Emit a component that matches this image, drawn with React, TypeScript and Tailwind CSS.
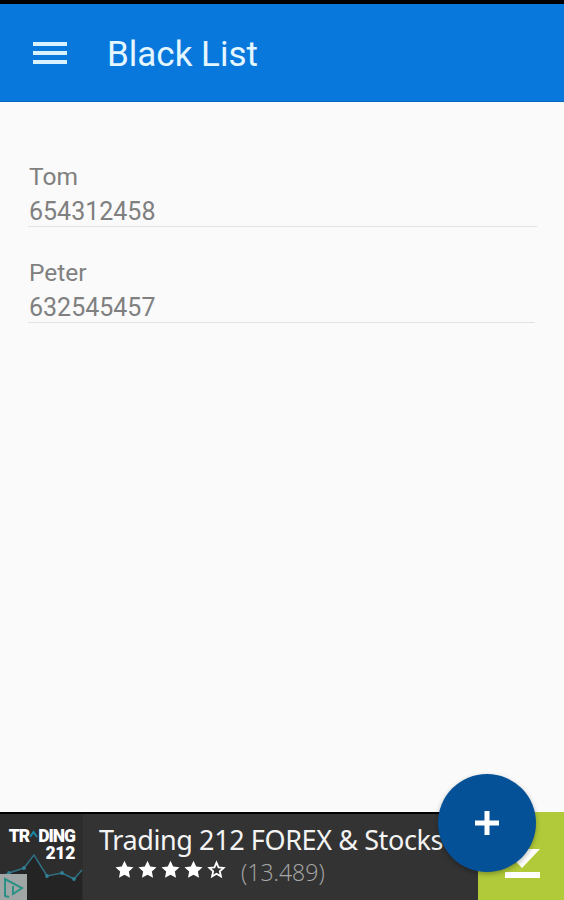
import React from 'react';

interface Contact {
  name: string;
  phone: string;
  line: string;
}

const contacts: Contact[] = [
  { name: 'Tom', phone: '654312458', line: 'w-[509px]' },
  { name: 'Peter', phone: '632545457', line: 'w-[507px]' },
];

const STAR = 'M12 .8l3.4 7.3 8 1-5.9 5.4 1.5 7.9L12 18.5l-7 3.9 1.5-7.9L.6 9.1l8-1z';

function Star({ filled }: { filled: boolean }) {
  return (
    <svg className="h-[19px] w-[19px]" viewBox="0 0 24 24">
      {filled ? (
        <path d={STAR} fill="#fff" />
      ) : (
        <path
          d="M12 3.3l2.6 5.9 6.4.7-4.8 4.3 1.4 6.4-5.6-3.3-5.6 3.3 1.4-6.4L3 9.9l6.4-.7z"
          fill="none"
          stroke="#fff"
          strokeWidth="2.3"
        />
      )}
    </svg>
  );
}

function Header() {
  return (
    <header className="flex h-[102px] items-center border-t-4 border-b border-t-black border-b-[#0766bd] bg-[#0878dc] pt-[4px] pl-[33px]">
      <button className="-mt-[3px] flex flex-col gap-[5px]" aria-label="Open menu">
        <span className="h-[4px] w-[34px] bg-[#d8f3ff]" />
        <span className="h-[4px] w-[34px] bg-[#d8f3ff]" />
        <span className="h-[4px] w-[34px] bg-[#d8f3ff]" />
      </button>
      <h1 className="ml-[40px] text-[35px] leading-[40px] text-[#e4f6ff]">Black List</h1>
    </header>
  );
}

function AdLogo() {
  return (
    <div className="relative h-full w-[83px] overflow-hidden bg-[#2d2d2d] pt-[14px] pr-[8px] text-right font-['Roboto'] text-[17.5px] leading-[17px] font-black tracking-[-1px] text-white">
      <div className="flex h-[17px] items-start justify-end">
        <span>TR</span>
        <svg className="mt-[2px] h-[8px] w-[9px]" viewBox="0 0 9 8">
          <path d="M1 7l3.5-5L8 7" fill="none" stroke="#168aa8" strokeWidth="2" />
        </svg>
        <span>DING</span>
      </div>
      <div className="tracking-[-0.3px]">212</div>
      <svg className="absolute top-[39px] left-0 h-[50px] w-[83px]" viewBox="0 0 83 50">
        <path d="M0 24L9 20l15-5L34 2l13 21 15-3 12 6 8-9v33H0z" fill="#242424" />
        <path d="M0 24L9 20l15-5L34 2l13 21 15-3 12 6 8-9" fill="none" stroke="#2f7185" strokeWidth="1.5" />
        <g fill="#318093">
          <circle cx="9" cy="20" r="1.9" />
          <circle cx="24" cy="15" r="1.9" />
          <circle cx="47" cy="23" r="1.9" />
          <circle cx="62" cy="20" r="1.9" />
          <circle cx="74" cy="26" r="1.9" />
        </g>
        <path d="M0 21h27v29H0z" fill="#a0a5a5" />
        <path d="M9 44l-4-1V26l17 9-9 6V33" fill="none" stroke="#2a9184" strokeWidth="2" />
      </svg>
    </div>
  );
}

function AdBanner() {
  return (
    <footer className="flex h-[88px] bg-[#333]">
      <div className="flex flex-1 border-t-2 border-black">
        <AdLogo />
        <div className="flex-1 pl-[16px] whitespace-nowrap">
          <div className="mt-[11px] font-['Noto_Sans'] text-[27px] leading-[30px] tracking-[-0.4px] text-[#f4f4f4]">
            Trading 212 FOREX &amp; Stocks
          </div>
          <div className="mt-[3px] flex items-center pl-[16px]">
            <div className="-mt-[5px] flex gap-[4px]">
              {[1, 2, 3, 4, 5].map((n) => (
                <Star key={n} filled={n < 5} />
              ))}
            </div>
            <span className="ml-[15px] font-['Open_Sans'] text-[23px] leading-[28px] font-light text-[#a8a8a8]">
              (13.489)
            </span>
          </div>
        </div>
      </div>
      <div className="flex w-[86px] justify-center bg-[#b1ca39]">
        <svg className="mt-[15px] ml-[2px] h-[52px] w-[38px]" viewBox="0 0 38 52">
          <path d="M12 0h13v22h12L19 41 1 22h11z" fill="#fff" />
          <path d="M2 45h35v6H2z" fill="#fff" />
        </svg>
      </div>
    </footer>
  );
}

export default function App() {
  return (
    <div className="relative flex h-[900px] w-[564px] flex-col overflow-hidden bg-[#fafafa] font-['Roboto',sans-serif]">
      <Header />
      <main className="flex-1 pt-[58px] pl-[28px]">
        {contacts.map((c) => (
          <div key={c.phone} className="mb-[29px] text-[25px] text-[#808080]">
            <div className="pl-[1px] text-[24.5px] leading-[34px]">{c.name}</div>
            <div className="pt-[3px] pl-[1px] leading-[29px]">{c.phone}</div>
            <div className={`h-px bg-[#e3e3e3] ${c.line}`} />
          </div>
        ))}
      </main>
      <AdBanner />

      {/* Floating add button */}
      <button
        className="absolute top-[774px] left-[438px] flex h-[98px] w-[98px] items-center justify-center rounded-full bg-[#045198] shadow-[0_2px_5px_rgba(0,0,0,0.3)]"
        aria-label="Add number"
      >
        <svg className="h-[24px] w-[24px]" viewBox="0 0 24 24">
          <path d="M12 0v24M0 12h24" stroke="#fff" strokeWidth="5" />
        </svg>
      </button>
    </div>
  );
}
